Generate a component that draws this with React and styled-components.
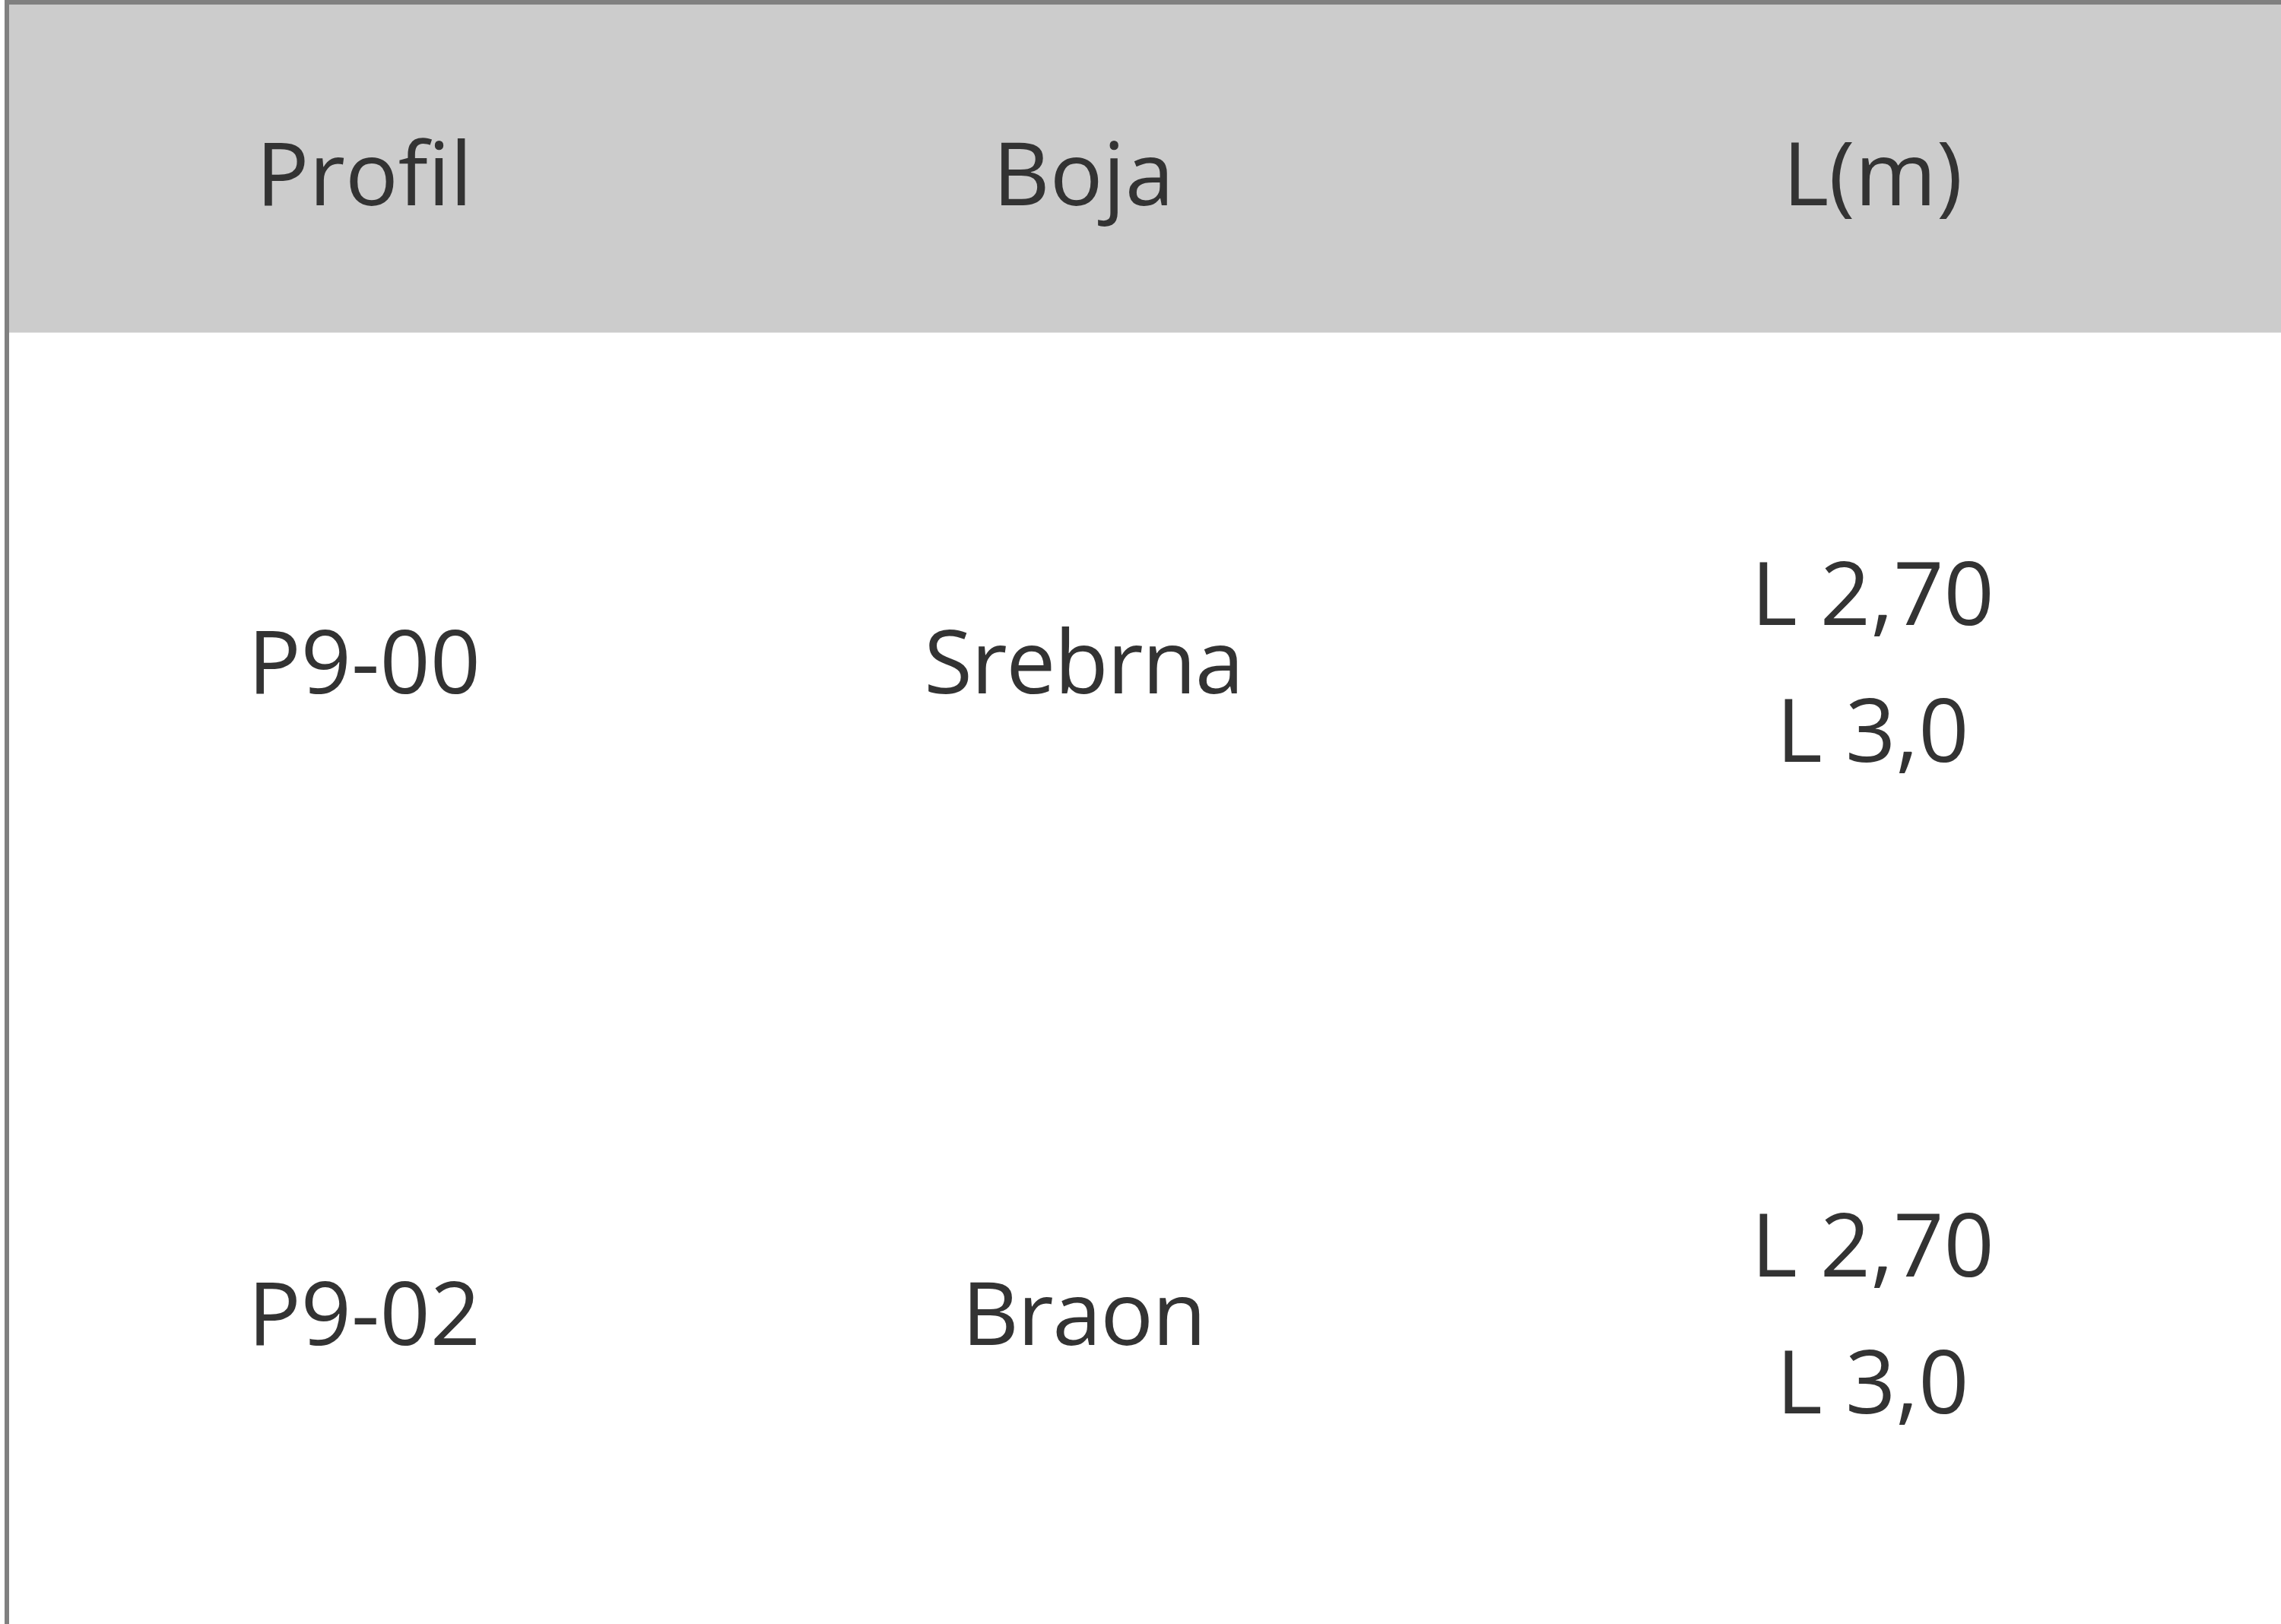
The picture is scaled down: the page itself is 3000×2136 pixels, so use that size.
import React from "react";
import styled, { createGlobalStyle } from "styled-components";

const GlobalStyle = createGlobalStyle`
  html, body {
    margin: 0;
    padding: 0;
    background: #ffffff;
    overflow: hidden;
  }
  body {
    font-family: "Open Sans", "Noto Sans", "Liberation Sans", sans-serif;
  }
`;

const Page = styled.div`
  padding-left: 6px;
  width: 3100px;
`;

const Table = styled.table`
  border-collapse: collapse;
  table-layout: fixed;
  width: 3010px;
  border-top: 6px solid #808080;
  border-left: 6px solid #808080;
  font-family: "Open Sans", "Noto Sans", "Liberation Sans", sans-serif;
  font-size: 116px;
  line-height: 180px;
  color: #333333;
`;

const HeadRow = styled.tr`
  background: #cccccc;
  height: 434px;
  border-bottom: 1px solid #e6e6e6;
`;

const HeadCell = styled.th`
  font-weight: 400;
  text-align: center;
  vertical-align: middle;
  padding: 8px 0 0 0;
  width: ${(p) => p.$w}px;
`;

const BodyRow = styled.tr`
  height: 857px;
`;

const Cell = styled.td`
  text-align: center;
  vertical-align: middle;
  padding: 2px 0 0 0;
  letter-spacing: ${(p) => (p.$tight ? "-1.5px" : "0")};
`;

const Line = styled.div`
  white-space: nowrap;
`;

const columns = [
  { label: "Profil", w: 934 },
  { label: "Boja", w: 958 },
  { label: "L(m)", w: 1118 },
];

const rows = [
  { profil: "P9-00", boja: "Srebrna", lengths: ["L 2,70", "L 3,0"] },
  { profil: "P9-02", boja: "Braon", lengths: ["L 2,70", "L 3,0"] },
];

export default function App() {
  return (
    <>
      <GlobalStyle />
      <Page>
        <Table>
          <thead>
            <HeadRow>
              {columns.map((c) => (
                <HeadCell key={c.label} $w={c.w}>
                  {c.label}
                </HeadCell>
              ))}
            </HeadRow>
          </thead>
          <tbody>
            {rows.map((r) => (
              <BodyRow key={r.profil}>
                <Cell>{r.profil}</Cell>
                <Cell $tight>{r.boja}</Cell>
                <Cell>
                  {r.lengths.map((l) => (
                    <Line key={l}>{l}</Line>
                  ))}
                </Cell>
              </BodyRow>
            ))}
          </tbody>
        </Table>
      </Page>
    </>
  );
}
